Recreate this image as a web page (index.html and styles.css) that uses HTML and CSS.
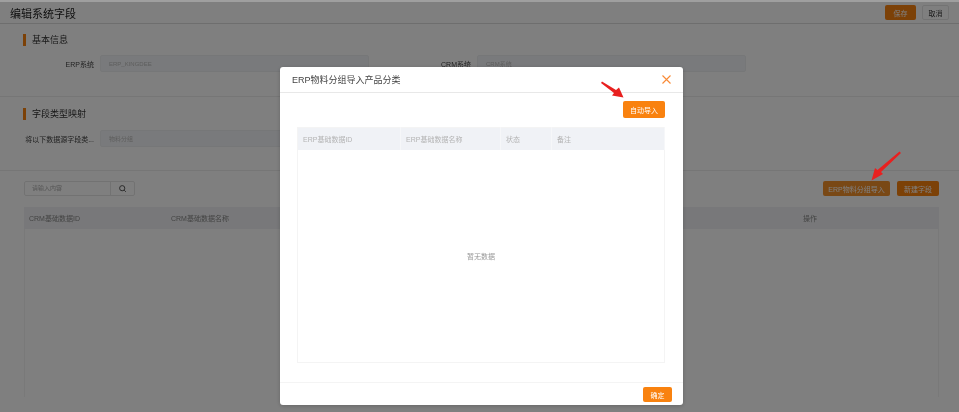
FILE: index.html
```html
<!DOCTYPE html>
<html lang="zh-CN">
<head>
  <meta charset="UTF-8">
  <title>编辑系统字段</title>
  <link rel="stylesheet" href="styles.css">
</head>
<body>
<div class="page">
  <header class="top-bar">
    <h1>编辑系统字段</h1>
    <div class="top-actions">
      <button class="btn btn-primary btn-save">保存</button>
      <button class="btn btn-plain">取消</button>
    </div>
  </header>

  <section class="block block-info">
    <h2 class="block-title">基本信息</h2>
    <div class="form-row">
      <div class="field">
        <label>ERP系统</label>
        <div class="input">ERP_KINGDEE</div>
      </div>
      <div class="field field-right">
        <label>CRM系统</label>
        <div class="input">CRM系统</div>
      </div>
    </div>
  </section>

  <section class="block block-map">
    <h2 class="block-title">字段类型映射</h2>
    <div class="form-row">
      <div class="field">
        <label>将以下数据源字段类...</label>
        <div class="input">物料分组</div>
      </div>
    </div>
  </section>

  <section class="list">
    <div class="toolbar">
      <div class="search">
        <div class="search-input">请输入内容</div>
        <div class="search-btn">
          <svg width="9" height="9" viewBox="0 0 9 9"><circle cx="4.2" cy="4.2" r="2.6" fill="none" stroke="#555" stroke-width="1"/><path d="M6.2 6.2L7.800 7.800" stroke="#555" stroke-width="1"/></svg>
        </div>
      </div>
      <div class="toolbar-actions">
        <button class="btn btn-primary btn-import">ERP物料分组导入</button>
        <button class="btn btn-primary btn-new">新建字段</button>
      </div>
    </div>
    <div class="data-table">
      <div class="data-head">
        <span class="col-id">CRM基础数据ID</span>
        <span class="col-name">CRM基础数据名称</span>
        <span class="col-op">操作</span>
      </div>
    </div>
  </section>
</div>

<div class="mask">
  <div class="modal">
    <div class="modal-head">
      <span>ERP物料分组导入产品分类</span>
      <svg class="modal-close" width="9" height="9" viewBox="0 0 9 9"><path d="M.5 .5L8.500 8.500M8.500 .5L.5 8.500" stroke="#f98a35" stroke-width="1.100" fill="none"/></svg>
    </div>
    <div class="modal-body">
      <div class="modal-tools">
        <button class="btn btn-primary btn-auto">自动导入</button>
      </div>
      <table class="erp-table">
        <thead>
          <tr>
            <th class="w-id">ERP基础数据ID</th>
            <th class="w-name">ERP基础数据名称</th>
            <th class="w-state">状态</th>
            <th>备注</th>
          </tr>
        </thead>
        <tbody>
          <tr><td colspan="4" class="empty">暂无数据</td></tr>
        </tbody>
      </table>
    </div>
    <div class="modal-foot">
      <button class="btn btn-primary btn-ok">确定</button>
    </div>
  </div>
</div>

<!-- red arrows drawn over the screenshot -->
<svg class="arrow-layer" width="959" height="412" viewBox="0 0 959 412">
  <path d="M601 83L602 81.500L616 90L619 87.500L623.500 97.500L612 95.500L614 93Z" fill="#e8201f"/>
  <path d="M899.500 151.500L901 153L881 172L883 174L871.500 180.500L875 168L877.500 170Z" fill="#e8201f"/>
</svg>
</body>
</html>
```

FILE: styles.css
```css
* {
  box-sizing: border-box;
}

html, body {
  margin: 0;
  padding: 0;
  width: 959px;
  height: 412px;
  overflow: hidden;
}

body {
  font-family: "Liberation Sans", "Noto Sans CJK SC", sans-serif;
  background-color: #fff;
  color: #555;
}

.page {
  height: 412px;
  padding-top: 2px;
  filter: blur(0.4px); /* the source picture is soft */
}

.top-bar {
  height: 22px;
  display: flex;
  align-items: center;
  justify-content: space-between;
  padding: 0 10px;
  border-bottom: 1px solid #dcdcdc;
}

.top-bar h1 {
  margin: 0;
  font-size: 11px;
  font-weight: normal;
  color: #222;
}

.top-actions {
  display: flex;
  gap: 6px;
}

.btn {
  font-family: inherit;
  font-size: 7px;
  border-radius: 2px;
  padding: 0;
  height: 15px;
  border: none;
  cursor: pointer;
}

.btn-primary {
  background-color: #f9820f;
  color: #fff;
}

.btn-plain {
  background-color: #fff;
  border: 1px solid #e6e6e6;
  color: #333;
  width: 27px;
}

.btn-save {
  width: 31px;
}

.block {
  padding: 10px 23px 0;
  border-bottom: 1px solid #ececec;
}

.block-info {
  height: 73px;
}

.block-map {
  height: 74px;
}

.block-title {
  margin: 0;
  height: 12px;
  line-height: 12px;
  padding-left: 6px;
  border-left: 3px solid #f9820f;
  font-size: 9px;
  font-weight: normal;
  color: #333;
}

.block-map .block-title {
  margin-top: 1px;
}

.form-row {
  display: flex;
  margin-top: 9px;
}

.block-map .form-row {
  margin-top: 10px;
}

.field {
  display: flex;
  align-items: center;
  width: 346px;
}

.field-right {
  margin-left: 31px;
}

.field label {
  width: 71px;
  margin-right: 6px;
  text-align: right;
  font-size: 7px;
  color: #444;
  white-space: nowrap;
}

.input {
  width: 269px;
  height: 17px;
  line-height: 17px;
  padding: 0 8px;
  font-size: 6px;
  color: #bbb;
  background-color: #f3f5f8;
  border: 1px solid #eceef1;
  border-radius: 2px;
}

.list {
  padding: 10px 20px 0 24px;
}

.toolbar {
  display: flex;
  justify-content: space-between;
  align-items: center;
}

.search {
  display: flex;
  height: 15px;
  width: 111px;
  border: 1px solid #e4e4e4;
  border-radius: 2px;
}

.search-input {
  flex: 1;
  padding-left: 7px;
  line-height: 13px;
  font-size: 6px;
  color: #aaa;
}

.search-btn {
  width: 24px;
  display: flex;
  align-items: center;
  justify-content: center;
  border-left: 1px solid #e4e4e4;
}

.toolbar-actions {
  display: flex;
  gap: 7px;
}

.btn-import {
  width: 67px;
  background-color: #f2902a;
}

.btn-new {
  width: 42px;
}

.data-table {
  margin-top: 11px;
  height: 190px;
  border: 1px solid #f2f2f2;
  border-bottom: none;
}

.data-head {
  height: 22px;
  margin: -1px -1px 0;
  display: grid;
  grid-template-columns: 142px 632px 1fr;
  align-items: center;
  padding-left: 5px;
  background-color: #f0f1f4;
  font-size: 7px;
  color: #888;
}

/* dark overlay behind the dialog */
.mask {
  position: fixed;
  top: 0;
  left: 0;
  width: 959px;
  height: 412px;
  background-color: rgba(0, 0, 0, 0.5);
  border-top: 2px solid rgba(255, 255, 255, 0.25);
  display: flex;
  justify-content: center;
  padding: 65px 0 0 4px;
}

.modal {
  width: 403px;
  height: 338px;
  background-color: #fff;
  border-radius: 3px;
  box-shadow: 0 1px 4px rgba(0, 0, 0, 0.2);
  display: flex;
  flex-direction: column;
}

.modal-head {
  height: 26px;
  padding: 0 12px;
  display: flex;
  align-items: center;
  justify-content: space-between;
  border-bottom: 1px solid #e8e8e8;
  font-size: 9px;
  color: #444;
}

.modal-body {
  flex: 1;
  padding: 8px 18px 0 17px;
}

.modal-tools {
  display: flex;
  justify-content: flex-end;
  margin-bottom: 9px;
}

.btn-auto {
  width: 42px;
  height: 17px;
}

.erp-table {
  width: 368px;
  height: 236px;
  border-collapse: collapse;
  table-layout: fixed;
  border: 1px solid #f4f4f4;
  font-size: 7px;
  color: #b4b4b4;
}

.erp-table th {
  height: 22px;
  padding: 0 0 0 5px;
  text-align: left;
  font-weight: normal;
  background-color: #f0f2f6;
  border-right: 1px solid #f6f7f9;
}

.w-id {
  width: 103px;
}

.w-name {
  width: 100px;
}

.w-state {
  width: 51px;
}

.empty {
  text-align: center;
  color: #999;
}

.modal-foot {
  height: 23px;
  padding: 4px 11px 0 0;
  display: flex;
  justify-content: flex-end;
  border-top: 1px solid #f4f4f4;
}

.btn-ok {
  width: 29px;
}

.arrow-layer {
  position: fixed;
  top: 0;
  left: 0;
}
```
